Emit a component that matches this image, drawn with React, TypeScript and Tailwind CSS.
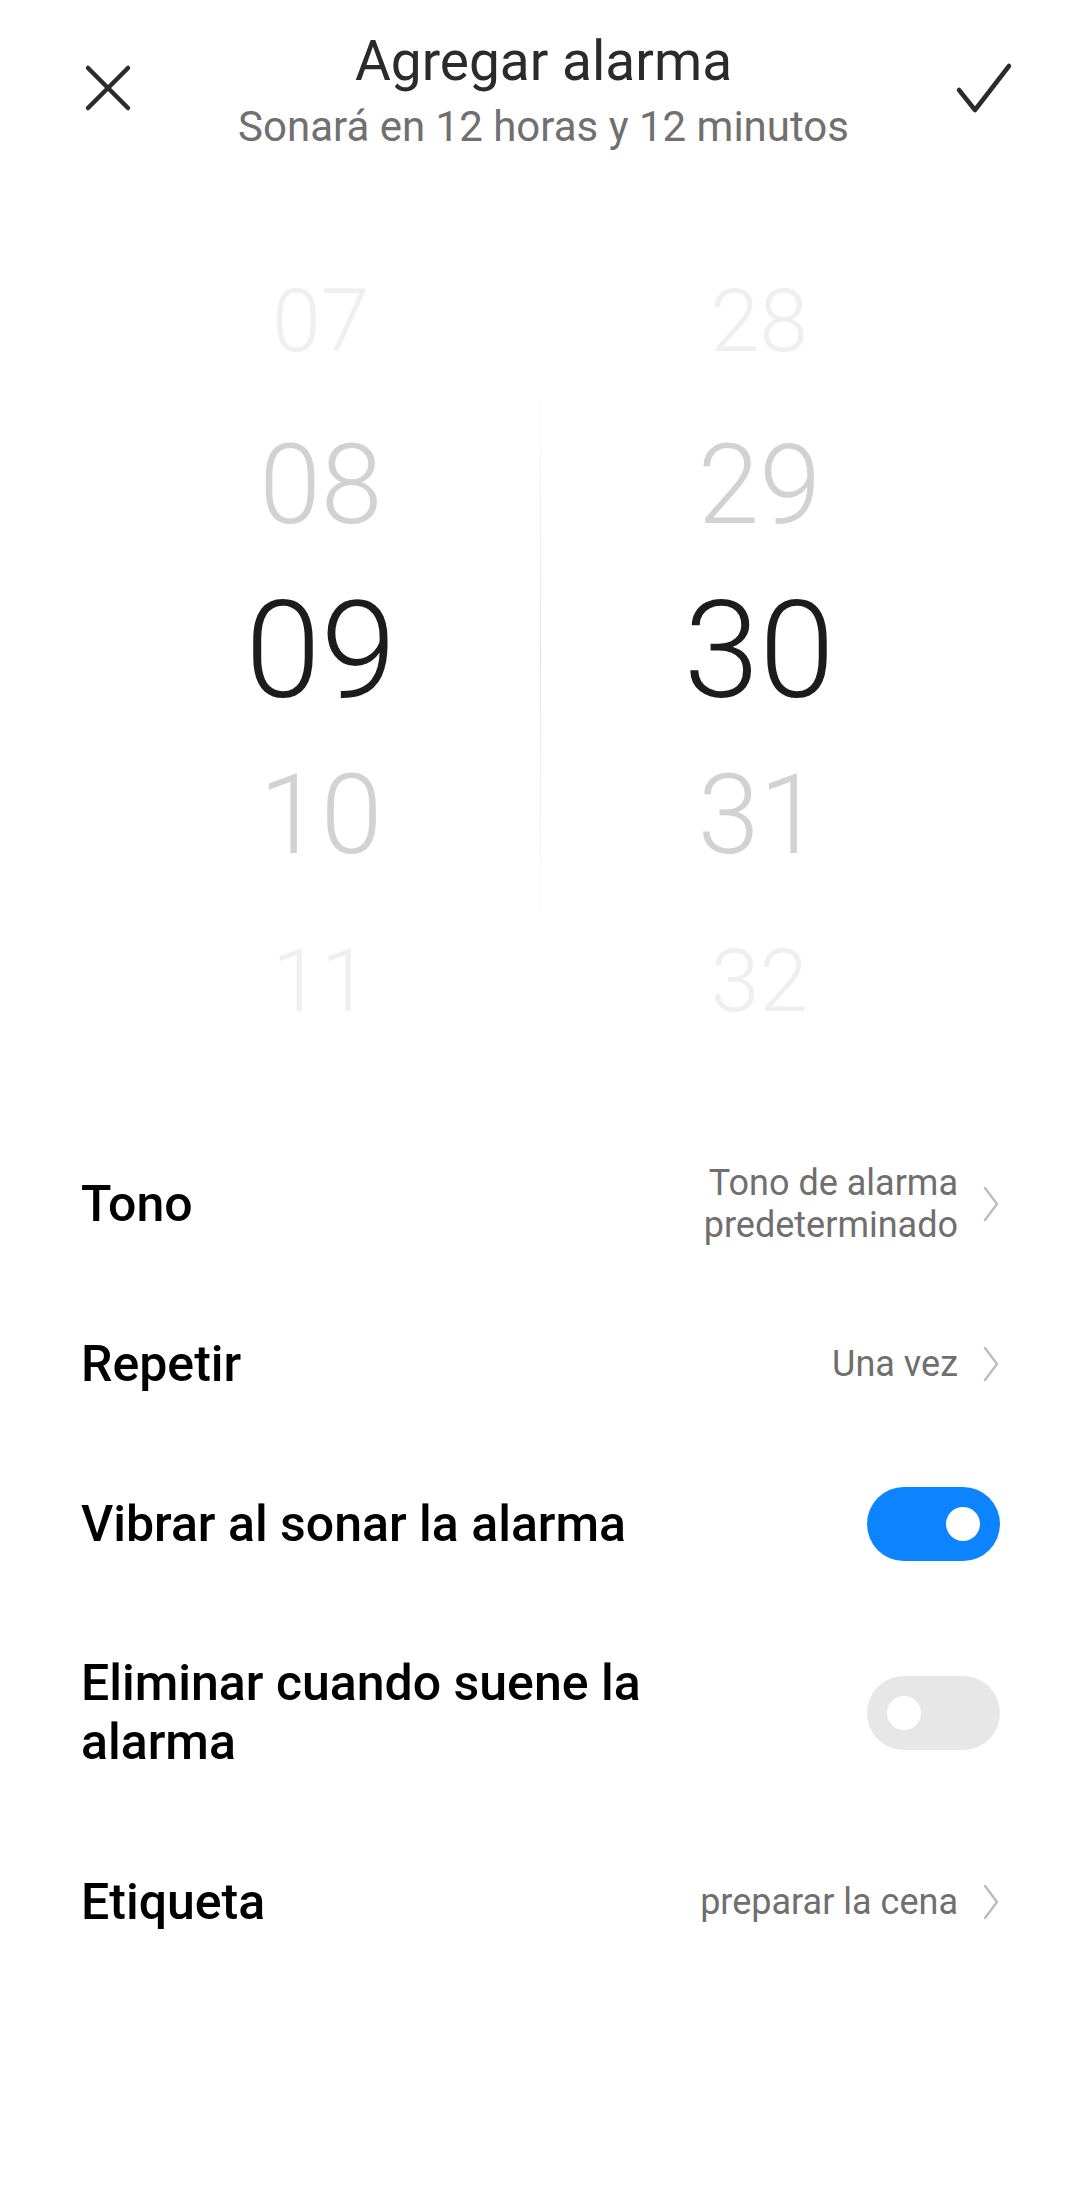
import React from "react";

const hours = [
  { v: "07", cls: "text-[88px] text-[#efefef]" },
  { v: "08", cls: "text-[111px] text-[#d2d2d2]" },
  { v: "09", cls: "text-[136px] text-[#1c1c1c]" },
  { v: "10", cls: "text-[111px] text-[#d2d2d2]" },
  { v: "11", cls: "text-[88px] text-[#efefef]" },
];

const minutes = ["28", "29", "30", "31", "32"];

const Chevron = () => (
  <svg width="18" height="38" viewBox="0 0 18 38" className="shrink-0">
    <path d="M3 3 L15 19 L3 35" fill="none" stroke="#bdbdbd" strokeWidth="2.5" strokeLinecap="round" strokeLinejoin="round" />
  </svg>
);

const Toggle = ({ on }: { on: boolean }) => (
  <div
    className={`flex h-[74px] w-[133px] shrink-0 items-center rounded-full px-[20px] ${
      on ? "justify-end bg-[#0d84ff]" : "justify-start bg-[#e7e7e7]"
    }`}
  >
    <div className="h-[34px] w-[34px] rounded-full bg-white" />
  </div>
);

const Row = ({ h, children }: { h: string; children: React.ReactNode }) => (
  <div className={`flex items-center justify-between pl-[81px] pr-[80px] ${h}`}>{children}</div>
);

const Label = ({ children }: { children: React.ReactNode }) => (
  <div className="text-[50px] font-medium leading-[59px] text-black">{children}</div>
);

export default function App() {
  return (
    <div className="min-h-[2200px] w-[1080px] bg-white font-['Roboto',sans-serif]">
      {/* header */}
      <div className="flex h-[180px] items-start justify-between pl-[84px] pr-[67px] pt-[60px]">
        <svg width="48" height="48" viewBox="0 0 48 48" className="mt-[4px]">
          <path d="M4 4 L44 44 M44 4 L4 44" stroke="#2b2b2b" strokeWidth="4.5" strokeLinecap="round" />
        </svg>
        <div className="-mt-[31px] flex flex-col items-center">
          <div className="text-[55px] leading-[64px] text-[#2b2b2b]">Agregar alarma</div>
          <div className="mt-[8px] text-[42px] leading-[52px] text-[#707070]">Sonará en 12 horas y 12 minutos</div>
        </div>
        <svg width="58" height="52" viewBox="0 0 58 52" className="mt-[2px]">
          <path d="M4 28 L20 48 L54 4" fill="none" stroke="#2b2b2b" strokeWidth="4.5" strokeLinecap="round" strokeLinejoin="round" />
        </svg>
      </div>

      {/* picker */}
      <div className="mt-[58px] flex px-[102px]">
        <div className="flex w-[438px] flex-col items-center">
          {hours.map((h) => (
            <div key={h.v} className={`flex h-[165px] items-center font-light leading-none ${h.cls}`}>
              {h.v}
            </div>
          ))}
        </div>
        <div className="mt-[112px] h-[612px] w-px bg-gradient-to-b from-white via-[#e4e4e4] to-white" />
        <div className="flex w-[438px] flex-col items-center">
          {minutes.map((m, i) => (
            <div key={m} className={`flex h-[165px] items-center font-light leading-none ${hours[i].cls}`}>
              {m}
            </div>
          ))}
        </div>
      </div>

      {/* settings */}
      <div className="mt-[61px]">
        <Row h="h-[160px]">
          <Label>Tono</Label>
          <div className="flex items-center gap-[24px]">
            <div className="text-right text-[36px] leading-[42px] text-[#6f6f6f]">
              Tono de alarma
              <br />
              predeterminado
            </div>
            <Chevron />
          </div>
        </Row>
        <Row h="h-[160px]">
          <Label>Repetir</Label>
          <div className="flex items-center gap-[24px]">
            <div className="text-[36px] leading-[42px] text-[#6f6f6f]">Una vez</div>
            <Chevron />
          </div>
        </Row>
        <Row h="h-[160px]">
          <Label>Vibrar al sonar la alarma</Label>
          <Toggle on />
        </Row>
        <Row h="h-[218px]">
          <div className="w-[620px]">
            <Label>Eliminar cuando suene la alarma</Label>
          </div>
          <Toggle on={false} />
        </Row>
        <Row h="h-[160px]">
          <Label>Etiqueta</Label>
          <div className="flex items-center gap-[24px]">
            <div className="text-[36px] leading-[42px] text-[#6f6f6f]">preparar la cena</div>
            <Chevron />
          </div>
        </Row>
      </div>
    </div>
  );
}
